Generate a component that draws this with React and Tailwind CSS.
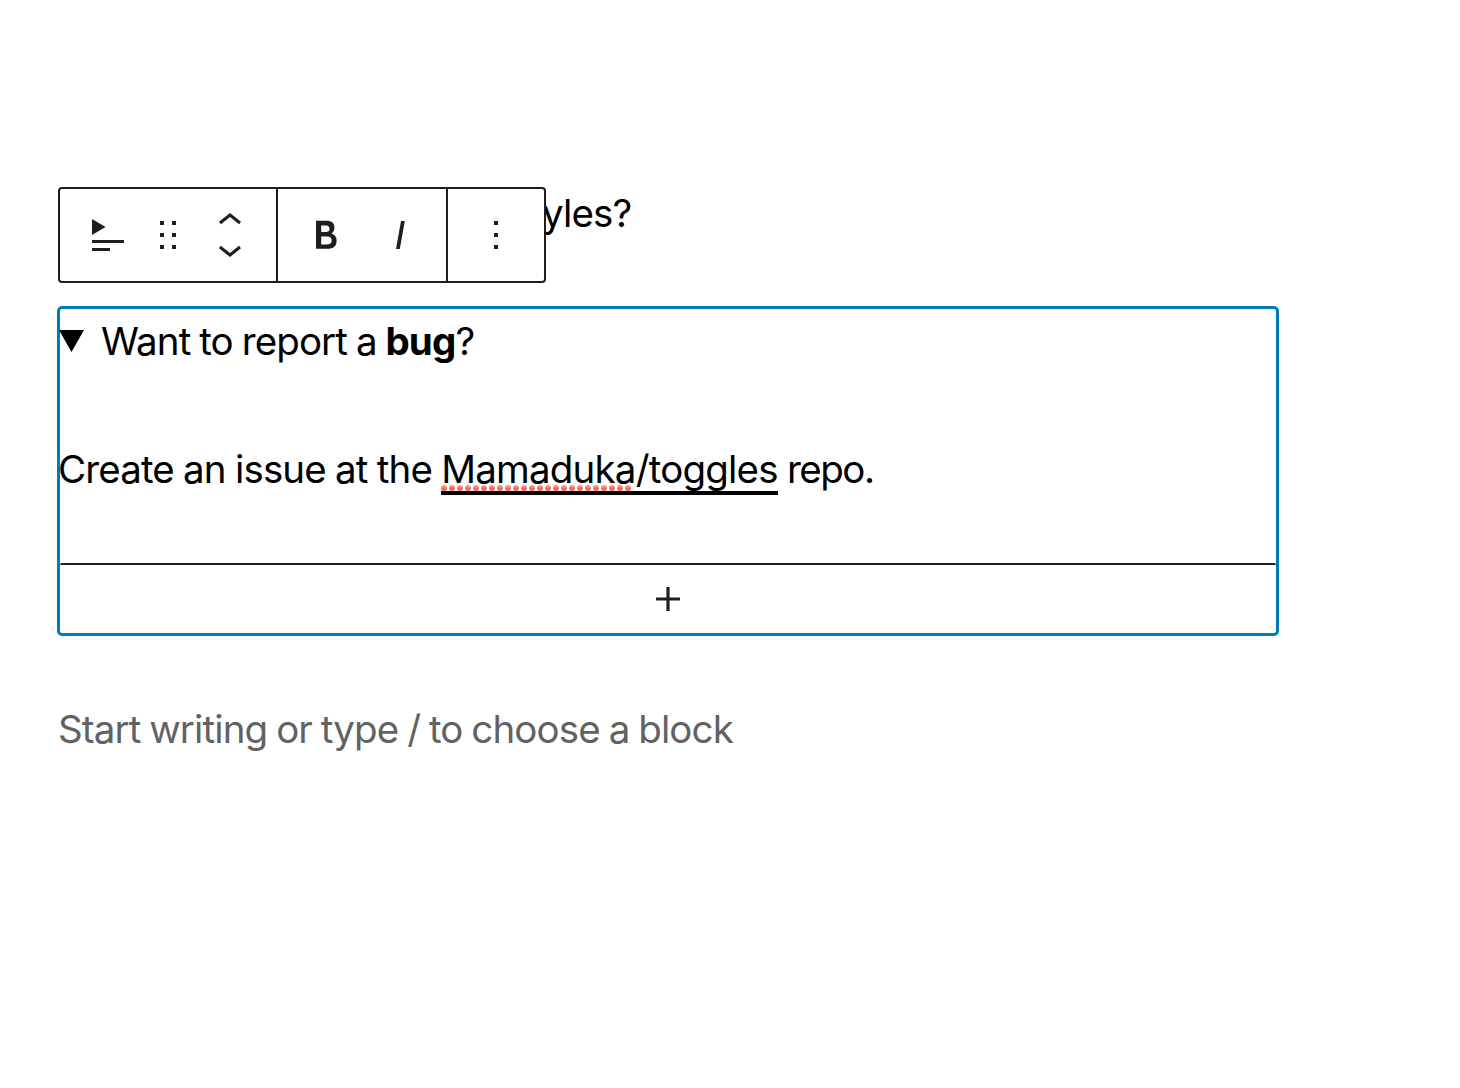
function Icon({ size = 48, view = 24, d, className = "" }) {
  return (
    <svg
      width={size}
      height={size}
      viewBox={`0 0 ${view} ${view}`}
      fill="currentColor"
      className={`block shrink-0 ${className}`}
    >
      <path d={d} />
    </svg>
  );
}

const paths = {
  drag: "M5 4h2V2H5v2zm6-2v2h2V2h-2zm-6 8h2V8H5v2zm6 0h2V8h-2v2zm-6 6h2v-2H5v2zm6 0h2v-2h-2v2z",
  up: "M6.5 12.4L12 8l5.5 4.4-.9 1.2L12 10l-4.5 3.6-1-1.2z",
  down: "M17.5 11.6L12 16l-5.5-4.4.9-1.2L12 14l4.5-3.6 1 1.2z",
  bold: "M14.7 11.3c1-.6 1.5-1.6 1.5-3 0-2.3-1.3-3.4-4-3.4H7v14h5.8c1.4 0 2.5-.3 3.3-1 .8-.7 1.2-1.7 1.2-2.9.1-1.9-.8-3.1-2.6-3.7zm-5.1-4h2.3c.6 0 1.1.1 1.4.4.3.3.5.7.5 1.2s-.2 1-.5 1.2c-.3.3-.8.4-1.4.4H9.6V7.3zm4.6 9c-.4.3-1 .4-1.7.4H9.6v-3.9h2.9c.7 0 1.3.2 1.7.5.4.3.6.8.6 1.5s-.2 1.2-.6 1.5z",
  italic: "M12.5 5L10 19h1.9l2.5-14z",
  more: "M13 19h-2v-2h2v2zm0-6h-2v-2h2v2zm0-6h-2V5h2v2z",
  plus: "M18 11.2h-5.2V6h-1.6v5.2H6v1.6h5.2V18h1.6v-5.2H18z",
};

function Toolbar() {
  return (
    <div className="absolute left-0 top-0 flex h-24 w-[488px] rounded-[4px] border-2 border-[#1e1e1e] bg-white text-[#1e1e1e]">
      <div className="flex w-[218px] items-center border-r-2 border-[#1e1e1e] pl-8">
        <svg width="32" height="32" viewBox="0 0 32 32" fill="currentColor" className="block">
          <path d="M0 0v16l13.6-8zM0 21h32v3H0zM0 29h18v3H0z" />
        </svg>
        <Icon size={36} view={18} d={paths.drag} className="ml-[26px]" />
        <div className="ml-5 flex h-[76px] w-12 flex-col">
          <Icon d={paths.up} />
          <Icon d={paths.down} className="-mt-5" />
        </div>
      </div>
      <div className="flex w-[170px] items-center gap-[26px] border-r-2 border-[#1e1e1e] pl-6">
        <Icon d={paths.bold} />
        <Icon d={paths.italic} />
      </div>
      <div className="flex flex-1 items-center justify-center">
        <Icon d={paths.more} />
      </div>
    </div>
  );
}

function Misspelled({ children }) {
  return (
    <span className="relative inline-block">
      {children}
      <svg width="192" height="6" className="absolute left-0 top-[44px]">
        <defs>
          <linearGradient id="dot" x1="0" y1="0" x2="0" y2="1">
            <stop offset="0" stopColor="#ffa39c" />
            <stop offset="1" stopColor="#ff4438" />
          </linearGradient>
        </defs>
        {Array.from({ length: 24 }, (_, i) => (
          <circle key={i} cx={3 + i * 8} cy="3" r="3" fill="url(#dot)" />
        ))}
      </svg>
    </span>
  );
}

export default function App() {
  return (
    <main className="h-[1088px] w-[1460px] overflow-hidden bg-white pl-[57px] pt-[187px] font-['Inter',sans-serif] text-[38.5px] leading-[56px] tracking-[-0.88px] text-black [word-spacing:-1.1px]">
      <section className="relative ml-px h-[119px] w-[1220px]">
        <p className="ml-[484px] whitespace-nowrap leading-[52px]">yles?</p>
        <Toolbar />
      </section>

      <section className="flex h-[330px] w-[1222px] flex-col rounded-[5px] border-[3px] border-[#007cba]">
        <div className="flex h-[62px] items-center">
          <svg width="25" height="22" viewBox="0 0 25 22" className="-ml-px mt-[2px] block">
            <path d="M0 0h25L12.5 22z" />
          </svg>
          <p className="ml-[17px] mt-[2px] whitespace-nowrap">
            Want to report a <strong className="font-bold">bug</strong>?
          </p>
        </div>
        <p className="-ml-[2px] mt-[70px] whitespace-nowrap [word-spacing:-0.65px]">
          Create an issue at the{" "}
          <span className="inline-block h-[54px] border-b-4 border-black align-top tracking-[-0.81px]">
            <Misspelled>Mamaduka</Misspelled>/toggles
          </span>{" "}
          <span className="tracking-[-1.5px]">repo.</span>
        </p>
        <button className="mt-auto flex h-[70px] w-full items-center justify-center rounded-t-[2px] border-t-2 border-[#1e1e1e] text-[#1e1e1e]">
          <Icon d={paths.plus} />
        </button>
      </section>

      <p className="ml-px mt-[65px] whitespace-nowrap text-[#626262]">
        Start writing or type / to choose a block
      </p>
    </main>
  );
}
